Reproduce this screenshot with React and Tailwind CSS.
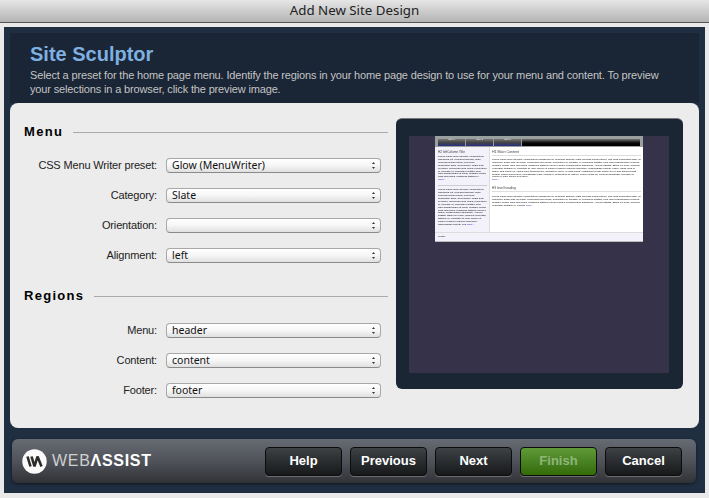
const LOREM =
  'Lorem ipsum dolor sit amet, consectetuer adipiscing elit. Praesent aliquam, justo convallis luctus rutrum, erat nulla fermentum diam, at nonummy quam ante ac quam. Maecenas urna purus, fermentum id, molestie in, commodo porttitor, felis. Nam blandit quam ut lacus. Quisque ornare risus quis ligula. Phasellus tristique purus a augue condimentum adipiscing. Aenean sagittis. Etiam leo pede, rhoncus venenatis, tristique in, vulputate at, odio. Donec et ipsum et sapien vehicula nonummy. Suspendisse potenti. Fusce varius urna id quam. Sed neque mi, varius eget, tincidunt nec, suscipit id, libero. In eget purus. Vestibulum ut nisl. Donec eu mi sed turpis feugiat feugiat. Integer turpis arcu, pellentesque eget, cursus et, fermentum ut, sapien. Fusce metus mi, eleifend sollicitudin, molestie id, varius et, nibh. Donec nec libero.';

function Chevrons() {
  return (
    <svg width="5" height="9" viewBox="0 0 5 9" className="shrink-0">
      <path d="M2.5 1 L4 3 H1 Z M2.5 8 L4 6 H1 Z" fill="#333" />
    </svg>
  );
}

function Field({ label, value }) {
  return (
    <div className="flex items-center h-[30px]">
      <div className="w-[133px] text-right text-[11px] tracking-[-0.15px] text-[#222] [font-family:'Liberation_Sans',sans-serif]">
        {label}
      </div>
      <div className="ml-[9px] w-[215px] h-[15px] flex items-center justify-between pl-[5px] pr-[4px] rounded-[4px] border border-[#a8a8a8] border-b-[#8a8a8a] bg-gradient-to-b from-white via-[#f6f6f6] to-[#e0e0e0] text-[10.5px] leading-none text-[#111] [font-family:'Noto_Sans',sans-serif]">
        <span>{value}</span>
        <Chevrons />
      </div>
    </div>
  );
}

function Section({ title, children }) {
  return (
    <div>
      <div className="flex items-center h-[16px]">
        <span className="text-[13px] font-bold tracking-[1.3px] text-black [font-family:'Liberation_Sans',sans-serif]">
          {title}
        </span>
        <div className="flex-1 h-px bg-[#aaaaaa] ml-[10px]" />
      </div>
      <div className="mt-[10px]">{children}</div>
    </div>
  );
}

function ThumbPreview() {
  return (
    <div className="w-[208px] h-[106px] flex flex-col bg-white border-b border-[#bbb] [font-family:'Liberation_Sans',sans-serif] text-[2.5px] leading-[2.9px] text-black overflow-hidden blur-[0.3px]">
      <div className="h-[11px] shrink-0 bg-[#9aa0a0] flex items-end px-[3px] pb-[1px]">
        <div className="flex-1 h-[7px] flex bg-gradient-to-b from-[#777] via-[#111] to-black">
          {['Title 1', 'Title 2', 'Title 3'].map((t) => (
            <div
              key={t}
              className="w-[28px] text-center text-white bg-gradient-to-b from-[#777] via-[#444] to-[#2c2c80] border-r border-[#999]"
            >
              {t}
            </div>
          ))}
        </div>
      </div>
      <div className="flex-1 flex min-h-0 overflow-hidden">
        <div className="w-[55px] shrink-0 bg-[#f3f1fa] border-r border-[#ddd] pl-[3px] pr-[2px] pt-[3px]">
          <div className="text-[3.2px] leading-[4px] text-[#444] mb-[2px]">H2 leftColumn Title</div>
          <div className="pb-[3px] border-b border-[#ccc] mb-[3px]">
            {LOREM.slice(0, 320)} <span className="text-[#22c]">More...</span>
          </div>
          <div>
            {LOREM.slice(0, 510)} <span className="text-[#22c]">More...</span>
          </div>
        </div>
        <div className="flex-1 min-w-0 pl-[2px] pr-[2px] pt-[3px]">
          <div className="text-[3.6px] leading-[4px] text-[#444] border-b border-[#ddd] pb-[1px] mb-[3px]">H1 Main Content</div>
          <div className="mb-[4px]">
            {LOREM}
            <span className="block text-[#22c]">More...</span>
          </div>
          <div className="text-[3.2px] leading-[4px] text-[#444] border-b border-[#ddd] pb-[1px] mb-[4px]">H3 level heading</div>
          <div>
            {LOREM.slice(0, 430)} <span className="text-[#22c]">More...</span>
          </div>
        </div>
      </div>
      <div className="h-[9px] shrink-0 bg-[#f3f1fa] border-t border-[#ddd] px-[3px] flex items-center">Footer</div>
    </div>
  );
}

function Logo() {
  return (
    <div className="flex items-center">
      <svg width="25" height="25" viewBox="0 0 25 25" className="shrink-0">
        <circle cx="12.5" cy="12.5" r="12.2" fill="#fafafa" />
        <path
          d="M5.5 7.5 L8.5 17.5 M9.5 7.5 L12.5 17.5 L15.5 7.5 L19.5 17.5"
          fill="none"
          stroke="#2b2b2b"
          strokeWidth="2.6"
          strokeLinejoin="bevel"
        />
      </svg>
      <div className="ml-[5px] text-[16px] leading-none text-white [font-family:'Liberation_Sans',sans-serif] tracking-[0.7px]">
        <span className="font-light text-[#cfcfcf]">WEB</span>
        <span className="font-bold">ΛSSIST</span>
      </div>
    </div>
  );
}

function FooterButton({ label, finish }) {
  const look = finish
    ? 'from-[#5f9a37] to-[#336b07] text-[#8fb57a]'
    : 'from-[#3f4245] to-[#17191b] text-white';
  return (
    <div
      className={`w-[77px] h-[29px] rounded-[4px] border border-[#0c0c0c] bg-gradient-to-b flex items-center justify-center text-[13px] font-bold [font-family:'Liberation_Sans',sans-serif] shadow-[0_1px_0_rgba(255,255,255,0.25)] ${look}`}
    >
      {label}
    </div>
  );
}

export default function App() {
  return (
    <div className="w-[709px] h-[498px] flex flex-col bg-[#e9e9e9] overflow-hidden">
      <div className="h-[23px] shrink-0 flex items-center justify-center bg-gradient-to-b from-[#e6e6e6] to-[#b4b4b4] border-b border-[#555] text-[13.3px] text-[#222] [font-family:'Noto_Sans',sans-serif]">
        Add New Site Design
      </div>

      <div className="flex-1 flex flex-col mt-[4px] mb-[5px] mx-[4px] bg-[#1f2e40] px-[6px] pt-[6px]">
        <div className="h-[70px] shrink-0 bg-[#1a2535] pl-[20px] pt-[10px]">
          <h1 className="text-[20px] leading-[22px] font-bold text-[#7fb0e2] [font-family:'Liberation_Sans',sans-serif]">
            Site Sculptor
          </h1>
          <p className="mt-[3px] w-[645px] text-[11px] tracking-[-0.15px] leading-[14px] text-[#c4c4c4] [font-family:'Liberation_Sans',sans-serif]">
            Select a preset for the home page menu. Identify the regions in your home page design to use for your menu
            and content. To preview your selections in a browser, click the preview image.
          </p>
        </div>

        <div className="h-[325px] shrink-0 flex bg-[#ececec] rounded-[8px]">
          <div className="w-[386px] shrink-0 pl-[14px] pr-[8px] pt-[21px]">
            <Section title="Menu">
              <Field label="CSS Menu Writer preset:" value="Glow (MenuWriter)" />
              <Field label="Category:" value="Slate" />
              <Field label="Orientation:" value="" />
              <Field label="Alignment:" value="left" />
            </Section>
            <div className="mt-[18px]">
              <Section title="Regions">
                <div className="mt-[11px]">
                  <Field label="Menu:" value="header" />
                  <Field label="Content:" value="content" />
                  <Field label="Footer:" value="footer" />
                </div>
              </Section>
            </div>
          </div>

          <div className="mt-[15px] w-[287px] h-[271px] rounded-[6px] bg-[#1a2634] border-t border-[#777] px-[13px] pt-[17px]">
            <div className="w-[260px] h-[237px] bg-[#35324a] flex justify-center">
              <ThumbPreview />
            </div>
          </div>
        </div>

        <div className="mt-[11px] ml-[2px] w-[684px] h-[44px] rounded-[6px] bg-gradient-to-b from-[#666a72] via-[#50535a] to-[#303236] flex items-center pl-[10px] shadow-[0_1px_3px_rgba(0,0,0,0.5)]">
          <Logo />
          <div className="ml-auto mr-[14px] flex gap-[8px]">
            <FooterButton label="Help" />
            <FooterButton label="Previous" />
            <FooterButton label="Next" />
            <FooterButton label="Finish" finish />
            <FooterButton label="Cancel" />
          </div>
        </div>
      </div>
    </div>
  );
}
